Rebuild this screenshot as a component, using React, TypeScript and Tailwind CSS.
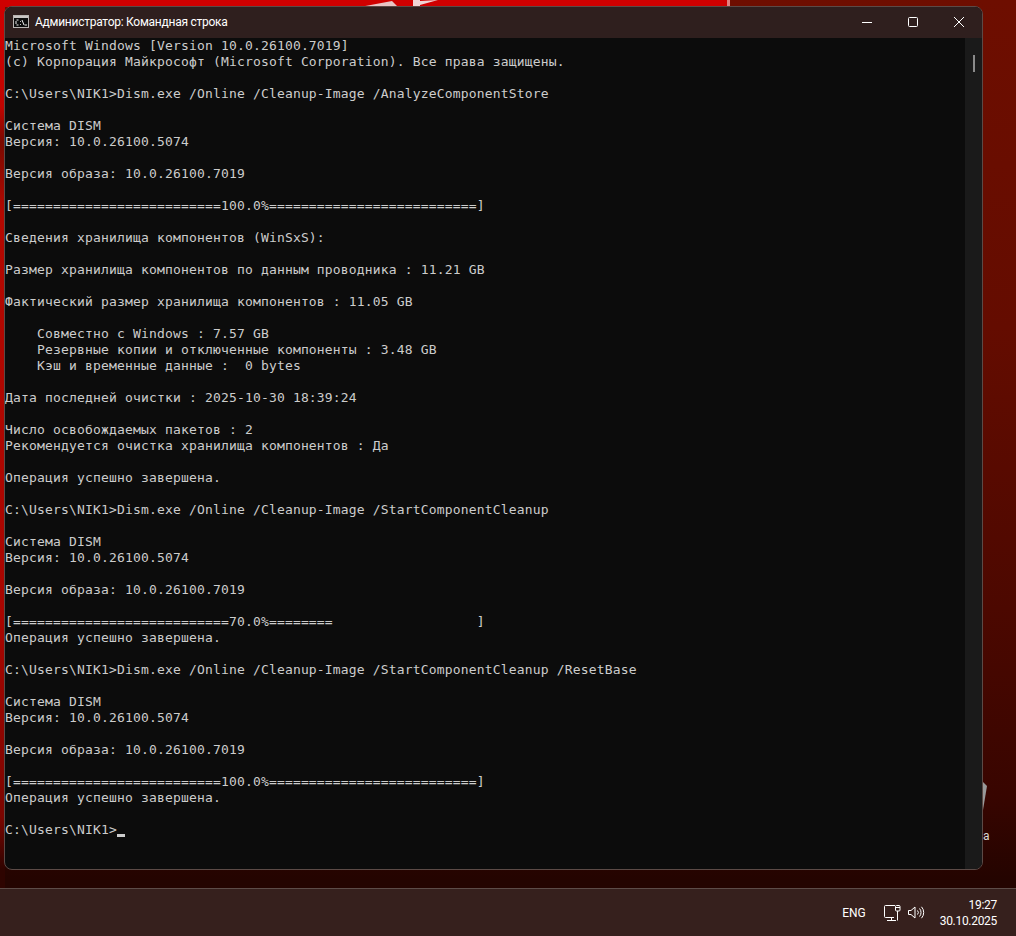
const lines = [
  'Microsoft Windows [Version 10.0.26100.7019]',
  '(c) Корпорация Майкрософт (Microsoft Corporation). Все права защищены.',
  '',
  'C:\\Users\\NIK1>Dism.exe /Online /Cleanup-Image /AnalyzeComponentStore',
  '',
  'Система DISM',
  'Версия: 10.0.26100.5074',
  '',
  'Версия образа: 10.0.26100.7019',
  '',
  '[==========================100.0%==========================]',
  '',
  'Сведения хранилища компонентов (WinSxS):',
  '',
  'Размер хранилища компонентов по данным проводника : 11.21 GB',
  '',
  'Фактический размер хранилища компонентов : 11.05 GB',
  '',
  '    Совместно с Windows : 7.57 GB',
  '    Резервные копии и отключенные компоненты : 3.48 GB',
  '    Кэш и временные данные :  0 bytes',
  '',
  'Дата последней очистки : 2025-10-30 18:39:24',
  '',
  'Число освобождаемых пакетов : 2',
  'Рекомендуется очистка хранилища компонентов : Да',
  '',
  'Операция успешно завершена.',
  '',
  'C:\\Users\\NIK1>Dism.exe /Online /Cleanup-Image /StartComponentCleanup',
  '',
  'Система DISM',
  'Версия: 10.0.26100.5074',
  '',
  'Версия образа: 10.0.26100.7019',
  '',
  '[===========================70.0%========                  ]',
  'Операция успешно завершена.',
  '',
  'C:\\Users\\NIK1>Dism.exe /Online /Cleanup-Image /StartComponentCleanup /ResetBase',
  '',
  'Система DISM',
  'Версия: 10.0.26100.5074',
  '',
  'Версия образа: 10.0.26100.7019',
  '',
  '[==========================100.0%==========================]',
  'Операция успешно завершена.',
  '',
];

function CmdIcon() {
  return (
    <svg width="16" height="13" viewBox="0 0 16 13" className="shrink-0">
      <rect x="0.5" y="0.5" width="15" height="12" fill="#0c0c0c" stroke="#b8b4b2" />
      <rect x="1" y="1" width="14" height="2" fill="#c9c6c4" />
      <path d="M3.5 5h2M3 6v3M3.5 10h2M7 6.5h.8M7 9.5h.8M9 5l2 5M11.5 10h2.5" stroke="#f0f0f0" strokeWidth="1" fill="none" />
    </svg>
  );
}

function WindowButtons() {
  return (
    <div className="flex h-full">
      <div className="w-[46px] flex items-center justify-center">
        <svg width="10" height="10" viewBox="0 0 10 10">
          <path d="M0 5.5h10" stroke="#fff" strokeWidth="1" />
        </svg>
      </div>
      <div className="w-[46px] flex items-center justify-center">
        <svg width="10" height="10" viewBox="0 0 10 10">
          <rect x="0.5" y="0.5" width="9" height="9" rx="1" fill="none" stroke="#fff" strokeWidth="1" />
        </svg>
      </div>
      <div className="w-[46px] flex items-center justify-center">
        <svg width="10" height="10" viewBox="0 0 10 10">
          <path d="M0 0l10 10M10 0L0 10" stroke="#fff" strokeWidth="1" />
        </svg>
      </div>
    </div>
  );
}

function TrayIcons() {
  return (
    <div className="flex items-center gap-[7px]">
      <svg width="17" height="16" viewBox="0 0 17 16" fill="none" stroke="#fff" strokeWidth="1">
        <path d="M10 12.5H1.5a1 1 0 0 1-1-1V1.5a1 1 0 0 1 1-1H11" />
        <path d="M3 15.5h9M7.5 12.5v3" />
        <rect x="11.5" y="0.5" width="4.5" height="5.5" rx="1" />
        <path d="M11.5 2.5h4.5M13.5 6v9.5" />
      </svg>
      <svg width="17" height="13" viewBox="0 0 17 13" fill="none" stroke="#fff" strokeWidth="1">
        <path d="M0.5 4.5h2.5L7 1v11L3 8.5H0.5z" />
        <path d="M9.5 4.5a3 3 0 0 1 0 4M11.5 2.5a6 6 0 0 1 0 8M13.5 0.8a8.5 8.5 0 0 1 0 11.4" />
      </svg>
    </div>
  );
}

export default function App() {
  return (
    <div className="relative w-[1016px] h-[936px] overflow-hidden flex flex-col bg-[linear-gradient(180deg,#6e0e00_0%,#640c00_35%,#4c0800_65%,#380500_85%,#240400_94%)]">
      {/* wallpaper */}
      <div className="absolute left-0 top-0 w-[728px] h-[7px] bg-[#cf0000]" />
      <div className="absolute left-[727px] top-0 w-[3px] h-[7px] bg-[#e08080]" />
      <svg width="100" height="7" viewBox="0 0 100 7" className="absolute left-[350px] top-0">
        <path d="M10 7L42 1l6 6z" fill="#e8c4c4" />
        <path d="M63 0h7v1L88 0 70 5v2h-7z" fill="#f0d4d4" />
      </svg>
      <div className="absolute left-0 top-0 w-[5px] h-[888px] bg-[linear-gradient(180deg,#cf0000_0%,#c00400_12%,#7a0a00_16%,#b40800_24%,#a80500_70%,#7a0500_92%,#2e0400_98%)]" />
      <svg width="5" height="30" viewBox="0 0 5 30" className="absolute left-[983px] top-[782px]">
        <path d="M0 0l4 4-2 12-2 12z" fill="#9a9a9a" />
      </svg>
      <div className="absolute left-[983px] top-[829px] text-[12px] leading-[14px] text-[#d8d8d8] font-['Roboto',sans-serif]">а</div>

      {/* console window */}
      <div className="relative ml-[4px] mt-[6px] w-[979px] h-[864px] flex flex-col rounded-[8px] border border-[#5c4a46] overflow-hidden bg-[#0c0c0c]">
        <div className="h-[31px] shrink-0 flex items-center justify-between bg-[#2f1f1e]">
          <div className="flex items-center pl-[8px] pb-[2px] gap-[6px] text-[12px] tracking-[-0.26px] text-white font-['Roboto',sans-serif]">
            <CmdIcon />
            <span>Администратор: Командная строка</span>
          </div>
          <div className="h-full pb-[2px]">
            <WindowButtons />
          </div>
        </div>
        <div className="flex-1 flex min-h-0">
          <div className="flex-1 min-w-0 text-[#cccccc] text-[13px] leading-[16px] tracking-[0.17px] font-['DejaVu_Sans_Mono',monospace] whitespace-pre">
            {lines.map((line, i) => (
              <div key={i} className="h-[16px]">{line}</div>
            ))}
            <div className="h-[16px]">
              C:\Users\NIK1&gt;<span className="inline-block w-[8px] h-[3px] bg-[#cccccc] align-[-3px]" />
            </div>
          </div>
          <div className="w-[17px] shrink-0 bg-[#1a1a1a] flex justify-center pt-[17px]">
            <div className="w-[2px] h-[17px] bg-[#8a8a8a]" />
          </div>
        </div>
      </div>

      {/* taskbar */}
      <div className="relative mt-auto h-[48px] shrink-0 flex items-center justify-end bg-[#36201d] border-t border-[#5d4c48] pr-[19px] text-white font-['Roboto',sans-serif] text-[12px]">
        <span className="mr-[18px]">ENG</span>
        <TrayIcons />
        <div className="ml-[15px] flex flex-col items-end leading-[16px] tracking-[-0.3px]">
          <span>19:27</span>
          <span>30.10.2025</span>
        </div>
      </div>
    </div>
  );
}
